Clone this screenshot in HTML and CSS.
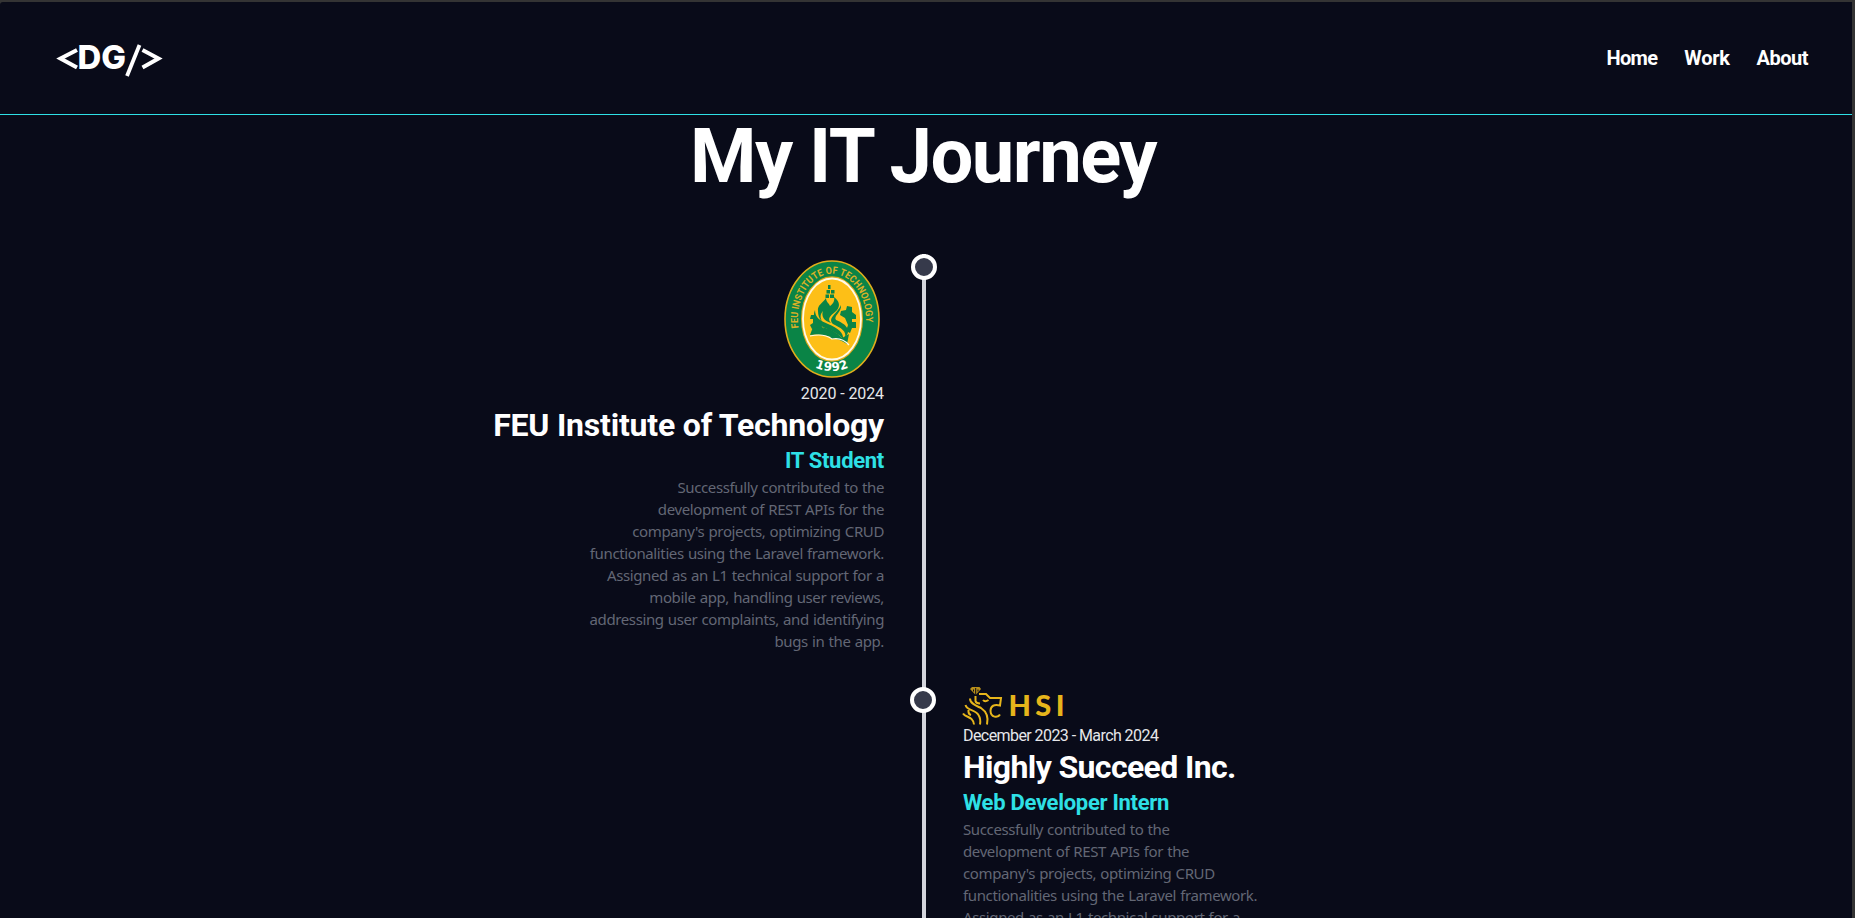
FILE: index.html
```html
<!DOCTYPE html>
<html lang="en">
<head>
<meta charset="utf-8">
<title>My IT Journey</title>
<link rel="stylesheet" href="styles.css">
</head>
<body>
<div class="page">
  <header class="header">
    <svg class="logo" width="108" height="36" viewBox="56 43 108 36" aria-label="DG">
      <g fill="none" stroke="#fff" stroke-width="4">
        <path d="M77 51L60.500 59.500L77 68.500"/>
        <path d="M142.500 51L158.500 59.500L142.500 68.500"/>
        <path d="M139.500 46L127 77" stroke-width="3.800"/>
      </g>
      <text class="logo-text" x="77.500" y="70" textLength="48.500" lengthAdjust="spacingAndGlyphs">DG</text>
    </svg>
    <nav class="nav">
      <a class="nav-home">Home</a><a class="nav-work">Work</a><a class="nav-about">About</a>
    </nav>
  </header>
  <main class="main">
    <h1 class="title">My IT Journey</h1>
    <div class="timeline">
      <section class="row row-left">
        <div class="entry entry-left">
          <svg class="seal" width="96" height="118" viewBox="0 0 96 118">
            <defs>
              <path id="arcTop" d="M14.500 68A34 45.500 0 1 1 80.500 72"/>
              <path id="arcBottom" d="M23 103Q48 119 73 103"/>
            </defs>
            <ellipse cx="48" cy="59" rx="47" ry="58" fill="#0a8446" stroke="#e0ae1c" stroke-width="1.600"/>
            <ellipse cx="48" cy="59" rx="29.500" ry="41.300" fill="#fdbf17" stroke="#dba91d" stroke-width="3"/>
            <ellipse cx="48" cy="59" rx="29" ry="40.500" fill="#fdbf17" stroke="#fffbe8" stroke-width="1.800"/>
            <text class="seal-name"><textPath href="#arcTop" textLength="137" lengthAdjust="spacingAndGlyphs">FEU INSTITUTE OF TECHNOLOGY</textPath></text>
            <text class="seal-year"><textPath href="#arcBottom" startOffset="50%">1992</textPath></text>
            <g fill="#0a8446">
              <path d="M44 25h2.500v4H44zM42.500 30h3.500v3.500h-3.500zM47 30h3.500v3.500H47zM41.500 34.500h3.500V38h-3.500zM46 34.500h4V38h-4z"/>
              <path d="M34 51C33 45 39 43 42 38C42 42 45 43 46 46C49 44 51 41 50 37C57 42 56 48 51 52C46 56 43 59 47 63C40 61 37 56 39 51C36 54 36 58 38 61C35 59 34 55 34 51Z"/>
              <path d="M31 50C31 58 37 61 44 64C54 68 60 73 59 79C54 73 48 71 41 68C31 64 28 57 31 50Z"/>
              <path d="M57 45C58 52 49 56 52 60C62 64 68 70 61 78C63 71 57 68 49 64C43 58 53 54 57 45Z"/>
              <path d="M57 51l5-1 1-4 5 1v5l4 3v4h-4v3h4v6h-4l-2 5-4-2 2-6-3-7-5-3z"/>
              <path d="M27 55h4l2 5 4 5 3 5-8-2-4 1-2-4 3-2v-4h-3z"/>
              <path d="M29 67Q41 66 49 75L52 79Q38 73 26 75ZM38 67Q51 70 58 78L65 74 63 84Q54 78 47 79Q45 73 38 67Z"/>
            </g>
            <path d="M26 76Q40 73 48 79Q58 77 65 85" fill="none" stroke="#fffbe8" stroke-width="1.200"/>
          </svg>
          <p class="date date-left">2020 - 2024</p>
          <h2 class="company company-left">FEU Institute of Technology</h2>
          <h3 class="role role-left">IT Student</h3>
          <p class="desc">Successfully contributed to the<br>development of REST APIs for the<br>company's projects, optimizing CRUD<br>functionalities using the Laravel framework.<br>Assigned as an L1 technical support for a<br>mobile app, handling user reviews,<br>addressing user complaints, and identifying<br>bugs in the app.</p>
        </div>
        <div class="rail"><span class="dot"></span></div>
      </section>
      <section class="row row-right">
        <div class="rail"><span class="dot dot-second"></span></div>
        <div class="entry entry-right">
          <svg class="hsi" width="102" height="37" viewBox="0 0 102 37">
            <path d="M9 0H16.500L18 2L12.700 8L7 2Z" fill="#b88f1a"/>
            <path d="M10.500 2.500V4.500M12.700 1V8M15 2.500V4.500" stroke="#090b19" stroke-width="1" fill="none"/>
            <g fill="none" stroke="#e6b51b" stroke-width="2">
              <path d="M12.500 9V14Q13 16.500 17 16.500M16 7H23L27 11H38L37 18.500Q28 16.500 27.500 23.500C27.500 31 35 31 37 27.500M20 13Q22 15.500 25.500 13M7 11.500C7 17 14 19 18 21C24 25 25.500 31 24 37.500M2.500 18C4 24 12 22 15.500 28Q18 32 17 37.500M5.500 23Q5 27 8 28M0 26.500C3 31 10 29 11 37.500"/>
            </g>
            <text class="hsi-text" x="45.500" y="29" textLength="56" lengthAdjust="spacing">HSI</text>
          </svg>
          <p class="date date-right">December 2023 - March 2024</p>
          <h2 class="company company-right">Highly Succeed Inc.</h2>
          <h3 class="role role-right">Web Developer Intern</h3>
          <p class="desc">Successfully contributed to the<br>development of REST APIs for the<br>company's projects, optimizing CRUD<br>functionalities using the Laravel framework.<br>Assigned as an L1 technical support for a</p>
        </div>
      </section>
    </div>
  </main>
</div>
</body>
</html>
```
FILE: styles.css
```css
* { box-sizing: border-box; }
body {
  margin: 0;
  height: 918px;
  overflow: hidden;
  background: #343434;
  color: #fff;
  font-family: Roboto, "Liberation Sans", sans-serif;
}
h1, h2, h3, p { margin: 0; white-space: nowrap; }
svg { overflow: visible; }
.page {
  width: 1852px;
  height: 916px;
  margin-top: 2px;
  overflow: hidden;
  background: #090b19;
  border-top-left-radius: 3px;
}
.header {
  height: 113px;
  padding: 0 44px 0 56px;
  display: flex;
  justify-content: space-between;
  align-items: center;
  border-bottom: 1px solid #2ee0e6;
}
.logo { display: block; margin-top: 4px; }
.logo-text { font: 800 33px Inter, sans-serif; fill: #fff; }
.nav { display: flex; gap: 27px; font-size: 20px; font-weight: 700; }
.nav-home { letter-spacing: -0.7px; }
.nav-work { letter-spacing: -0.3px; }
.nav-about { letter-spacing: -0.5px; }
.title {
  height: 139px;
  line-height: 82px;
  font-size: 76px;
  font-weight: 700;
  letter-spacing: -1.55px;
  text-align: center;
  padding-right: 6px;
}
.row { display: flex; }
.row-left { height: 433px; padding-left: 484px; }
.row-right { height: 300px; padding-left: 911px; }
.entry { display: flex; flex-direction: column; }
.entry-left { width: 400px; align-items: flex-end; text-align: right; padding-top: 6px; }
.entry-right { padding-left: 26px; align-items: flex-start; }
.seal { margin: 0 4px 4px 0; }
.seal-name { font: 700 10px Roboto, sans-serif; fill: #dcb126; }
.seal-year { font: 700 12px "DejaVu Sans", sans-serif; letter-spacing: .5px; fill: #fff; text-anchor: middle; }
.hsi-text { font: 900 29px Lato, sans-serif; fill: #e6b51b; }
.rail {
  width: 26px;
  display: flex;
  justify-content: center;
  background: linear-gradient(#d3d5dc, #d3d5dc) center / 4px 100% no-repeat;
}
.row-left .rail { margin-left: 27px; }
.dot { flex: none; width: 26px; height: 26px; border: 4px solid #fff; border-radius: 50%; background: #363a4b; }
.dot-second { margin-right: 2px; }
.date { font-size: 16px; line-height: 24px; color: #e6e7ea; letter-spacing: -0.1px; }
.date-right { letter-spacing: -0.57px; }
.company { font-size: 32px; line-height: 38px; font-weight: 700; letter-spacing: -0.2px; }
.company-right { letter-spacing: -0.62px; }
.role { font-size: 22px; line-height: 34px; margin-bottom: -2px; font-weight: 700; letter-spacing: -0.3px; color: #2ee0e6; }
.desc { font: 400 15px/22px "Noto Sans", sans-serif; letter-spacing: -0.38px; word-spacing: .6px; color: #636775; }
```
